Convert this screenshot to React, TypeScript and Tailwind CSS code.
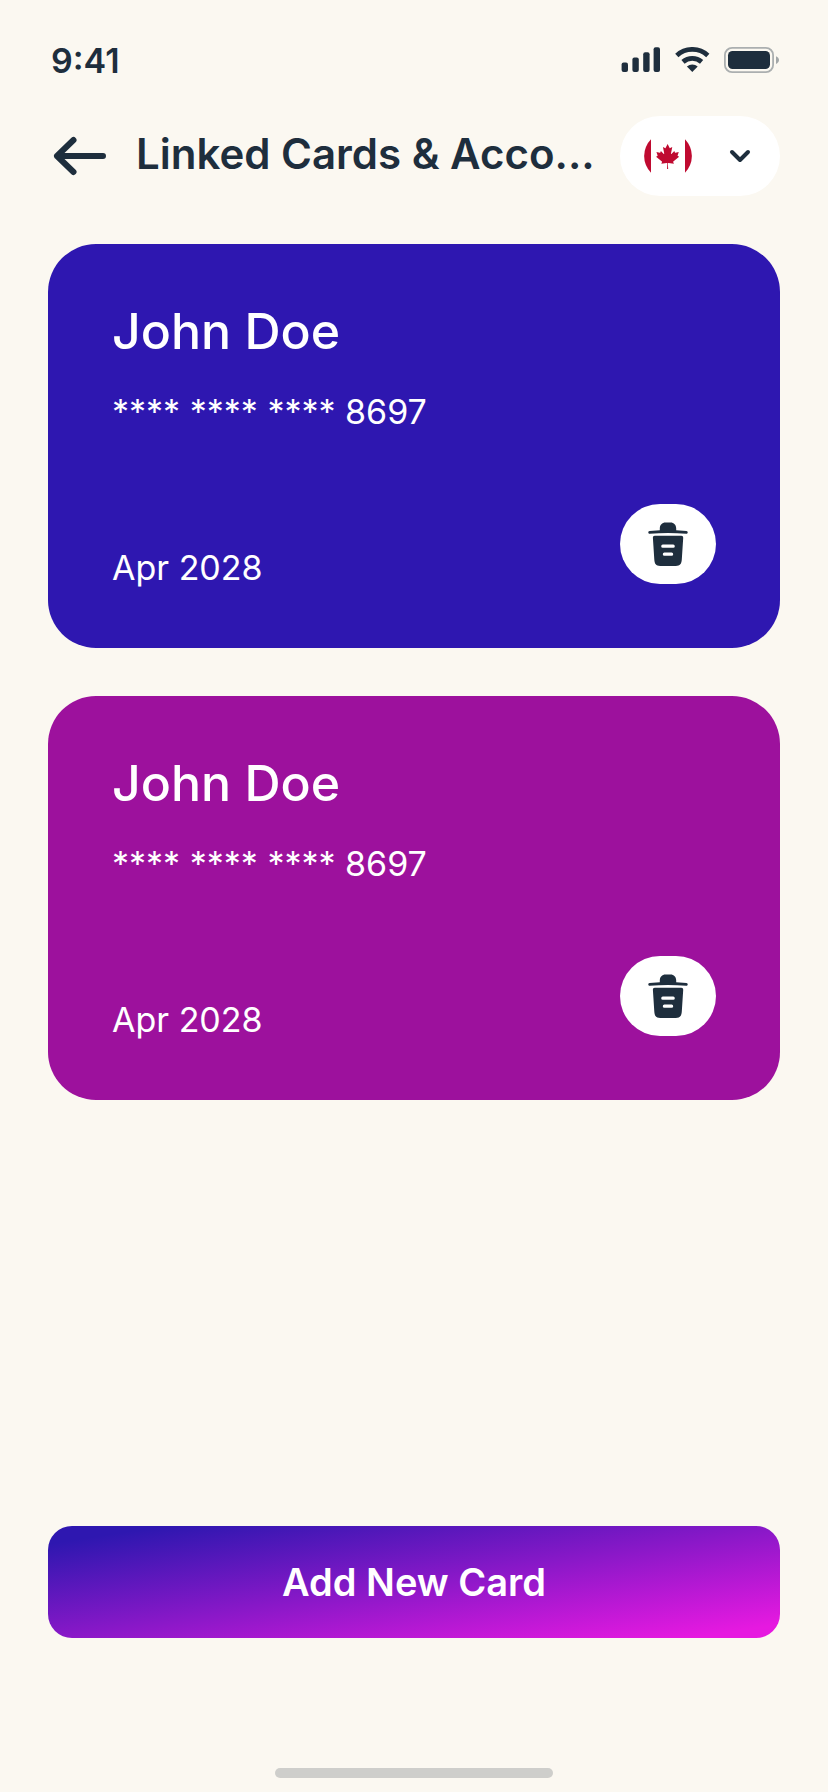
import { useState } from "react"

type LinkedCard = {
  id: number
  holder: string
  number: string
  expiry: string
  color: string
}

const defaultCards: LinkedCard[] = [
  { id: 1, holder: "John Doe", number: "**** **** **** 8697", expiry: "Apr 2028", color: "bg-[#2e17b0]" },
  { id: 2, holder: "John Doe", number: "**** **** **** 8697", expiry: "Apr 2028", color: "bg-[#9d119d]" },
]

function StatusBar() {
  return (
    <div className="flex h-[116px] items-center justify-between pl-[3px] pt-1">
      <span className="pt-[2px] text-[34px] leading-10 font-semibold">9:41</span>
      <div className="flex items-center gap-[14px]" aria-hidden="true">
        <svg width="39" height="26" viewBox="0 0 39 26" fill="currentColor">
          <rect x="0.6" y="15.500" width="6.400" height="9.500" rx="2" />
          <rect x="11.400" y="10.500" width="6.400" height="14.500" rx="2" />
          <rect x="22.200" y="5.200" width="6.400" height="19.800" rx="2" />
          <rect x="32.600" y="0.300" width="6.400" height="24.700" rx="2" />
        </svg>
        <svg width="36" height="26" viewBox="0 0 36 26" fill="none" stroke="currentColor" strokeWidth="4.8">
          <path d="M2.8 8.4a23 23 0 0 1 31 0" />
          <path d="M9 14.9a14 14 0 0 1 18.600 0" />
          <path d="M12.900 19.400a8.4 8.4 0 0 1 10.800 0L18.300 25z" fill="currentColor" stroke="none" />
        </svg>
        <svg width="56" height="26" viewBox="0 0 56 26">
          <rect x="0.9" y="0.9" width="48.2" height="24.2" rx="7.2" fill="none" stroke="currentColor" strokeOpacity="0.36" strokeWidth="1.8" />
          <rect x="4" y="4" width="42" height="18" rx="4.6" fill="currentColor" />
          <path d="M52 9.2c1.8.7 3 2.200 3 3.900s-1.200 3.200-3 3.900z" fill="currentColor" fillOpacity="0.4" />
        </svg>
      </div>
    </div>
  )
}

function CanadaFlag() {
  return (
    <svg width="48" height="48" viewBox="0 0 48 48" fill="#bf0a30" aria-hidden="true">
      <path d="M7 7.200a24 24 0 0 0 0 33.600z" />
      <path d="M41 7.200a24 24 0 0 1 0 33.600z" />
      <path
        transform="translate(23.6 24.300) scale(0.0062)"
        d="m-90 2030 45-863a95 95 0 0 0-111-98l-859 151 116-320a65 65 0 0 0-20-73l-941-762 212-99a65 65 0 0 0 34-79l-186-572 542 115a65 65 0 0 0 73-38l105-247 423 454a65 65 0 0 0 111-57l-204-1052 327 189a65 65 0 0 0 91-27l332-652 332 652a65 65 0 0 0 91 27l327-189-204 1052a65 65 0 0 0 111 57l423-454 105 247a65 65 0 0 0 73 38l542-115-186 572a65 65 0 0 0 34 79l212 99-941 762a65 65 0 0 0-20 73l116 320-859-151a95 95 0 0 0-111 98l45 863z"
      />
    </svg>
  )
}

function Header() {
  return (
    <header className="flex items-center">
      <button type="button" aria-label="Back" className="mr-6 shrink-0">
        <svg width="64" height="48" viewBox="0 0 64 48" fill="none" stroke="currentColor" strokeWidth="6" strokeLinecap="round" strokeLinejoin="round">
          <path d="M55 24H9M25.500 8 9 24l16.500 16" />
        </svg>
      </button>
      <h1 className="min-w-0 flex-1 pb-1 text-[42px] leading-[48px] font-semibold whitespace-nowrap">Linked Cards &amp; Acco...</h1>
      <button
        type="button"
        aria-label="Country"
        className="flex h-20 w-40 shrink-0 items-center justify-between rounded-full bg-white pr-7 pl-6"
      >
        <CanadaFlag />
        <svg width="24" height="24" viewBox="0 0 24 24" fill="none" stroke="currentColor" strokeWidth="4" strokeLinecap="round" strokeLinejoin="round" aria-hidden="true">
          <path d="m4 8 8 8 8-8" />
        </svg>
      </button>
    </header>
  )
}

function TrashIcon() {
  return (
    <svg width="40" height="46" viewBox="0 0 40 46" fill="currentColor" aria-hidden="true">
      <path d="M11.800 9.300V7.600c0-3.500 2.300-6 5.700-6h5c3.400 0 5.700 2.500 5.700 6v1.700l10.200.8c.9.100 1.400.7 1.300 1.500s-.7 1.300-1.500 1.200c-12.100-1.200-24.300-1.200-36.400 0-.8.1-1.400-.4-1.500-1.200s.4-1.400 1.300-1.500z" />
      <path
        fillRule="evenodd"
        d="M6.800 14.800h26.500c1.200 0 2 .9 1.900 2.100L33.800 38.500c-.3 4.300-1.700 6.400-6 6.400H12.200c-4.300 0-5.600-2.100-5.900-6.400L4.900 16.900c-.1-1.200.7-2.100 1.900-2.100zM14.800 23.600a1.600 1.600 0 0 0 0 3.200h10.400a1.600 1.600 0 0 0 0-3.200zM16.400 31.600a1.600 1.600 0 0 0 0 3.200h7.200a1.600 1.600 0 0 0 0-3.200z"
      />
    </svg>
  )
}

function BankCard({ card, onDelete }: { card: LinkedCard; onDelete: () => void }) {
  return (
    <li className={`rounded-[48px] p-16 text-white ${card.color}`}>
      <h2 className="text-[50px] leading-[46px] font-medium">{card.holder}</h2>
      <p className="mt-[42px] text-[34px] leading-8">{card.number}</p>
      <div className="mt-19 flex items-end justify-between">
        <p className="text-[34px] leading-8">{card.expiry}</p>
        <button
          type="button"
          onClick={onDelete}
          aria-label="Delete card"
          className="flex h-20 w-24 items-center justify-center rounded-full bg-white text-[#1e2e3d]"
        >
          <TrashIcon />
        </button>
      </div>
    </li>
  )
}

export default function App() {
  const [cards, setCards] = useState<LinkedCard[]>(defaultCards)

  const removeCard = (id: number) => setCards((prev) => prev.filter((card) => card.id !== id))

  return (
    <div className="flex min-h-screen flex-col bg-[#fbf8f1] px-12 pb-[14px] font-['Inter',sans-serif] text-[#1e2e3d]">
      <StatusBar />
      <Header />

      <ul className="mt-12 flex flex-1 flex-col gap-12">
        {cards.map((card) => (
          <BankCard key={card.id} card={card} onDelete={() => removeCard(card.id)} />
        ))}
      </ul>

      <button
        type="button"
        className="mt-12 h-28 w-full rounded-3xl bg-[linear-gradient(to_bottom_right,#2e17b0_8%,#e619e0_94%)] text-[38px] leading-10 font-semibold text-white"
      >
        Add New Card
      </button>

      {/* Home indicator */}
      <div className="mx-auto mt-[130px] h-[10px] w-[278px] rounded-full bg-[#cececb]" />
    </div>
  )
}
